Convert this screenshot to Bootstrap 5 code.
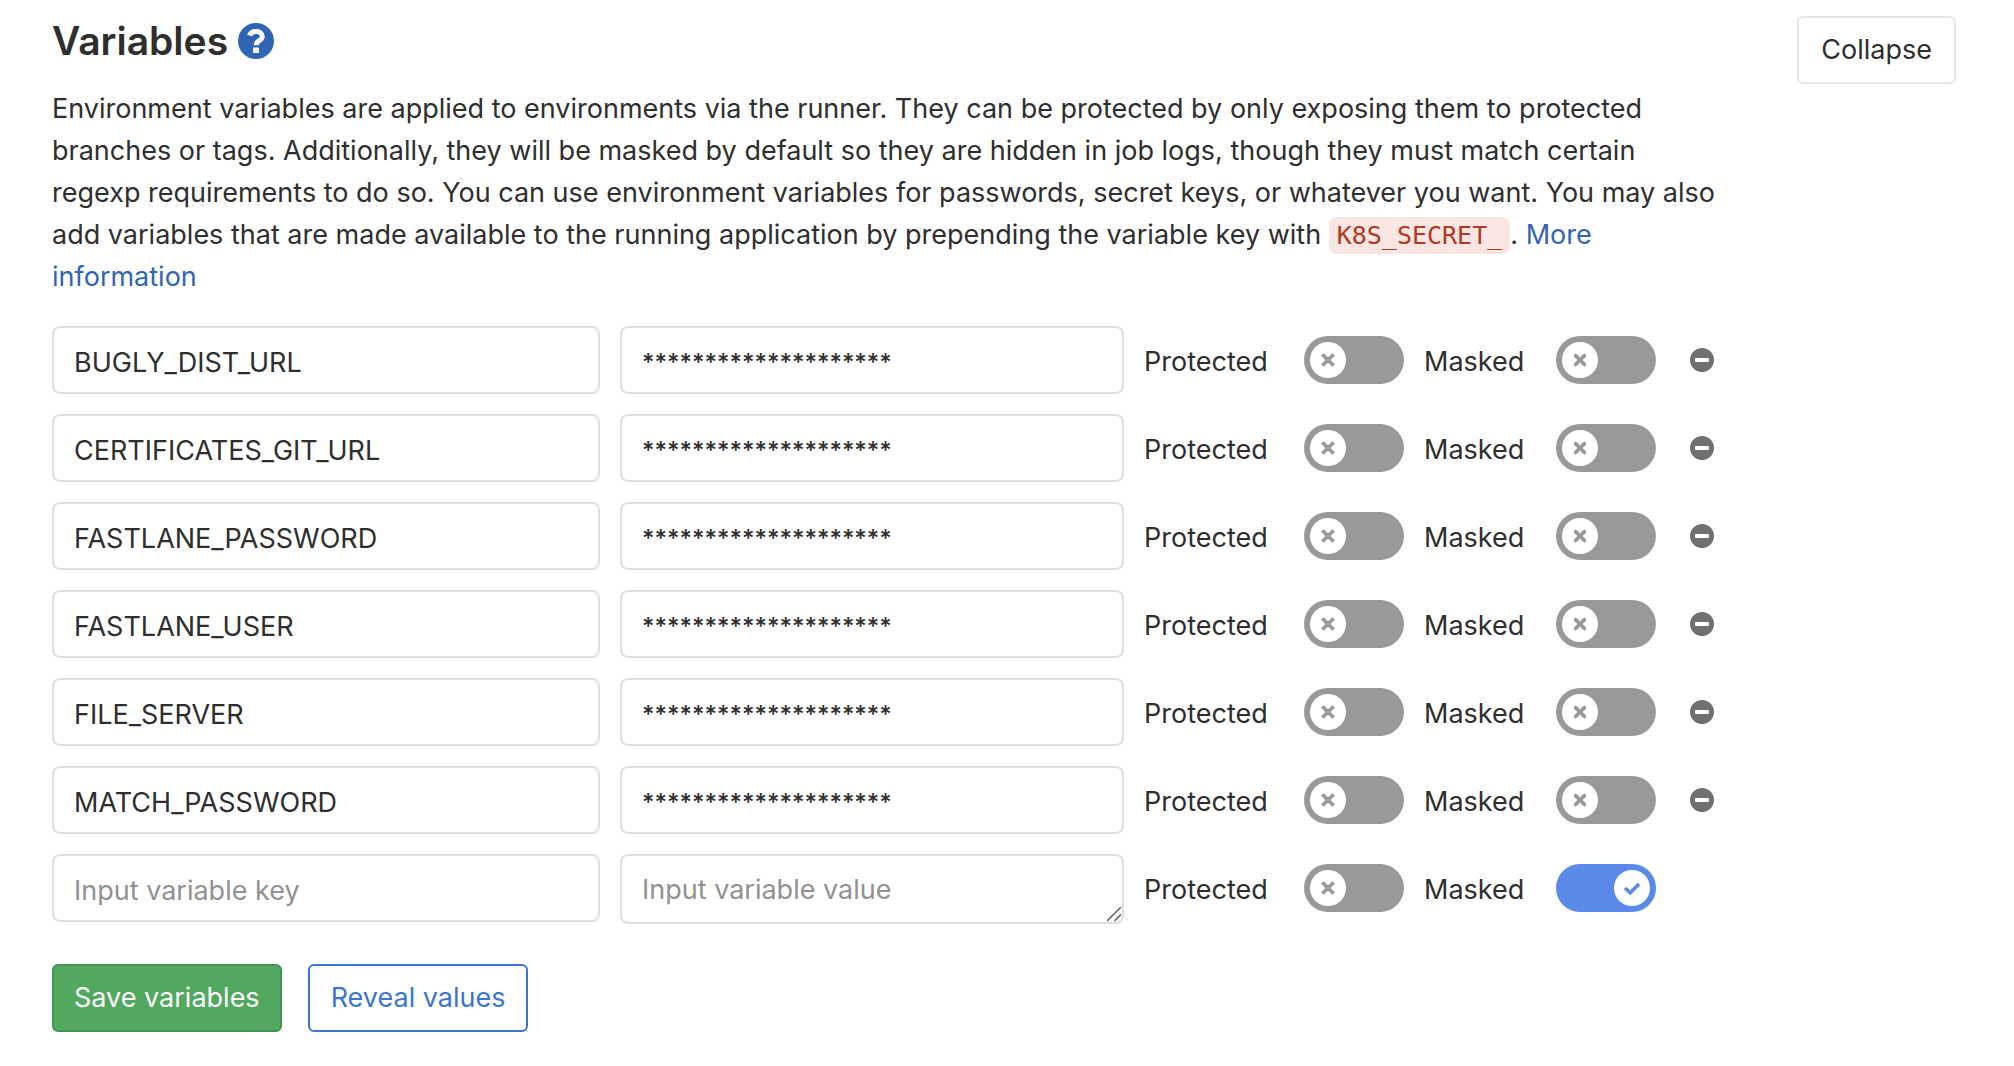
<!DOCTYPE html>
<html lang="en">
<head>
<meta charset="utf-8">
<meta name="viewport" content="width=device-width, initial-scale=1">
<title>Variables</title>
<link href="https://cdn.jsdelivr.net/npm/bootstrap@5.3.0/dist/css/bootstrap.min.css" rel="stylesheet">
<style>
  body { font-family: Inter, "Liberation Sans", sans-serif; font-size: 27px; line-height: 42px; color: #2e2e2e; background: #fff; }
  .settings { padding: 16px 58px 34px 52px; }
  .settings-title { gap: 10px; font-size: 39px; line-height: 50px; font-weight: 600; }
  .settings-intro { padding-right: 226px; margin: 4px 0 28px; }
  .settings a { color: #3065b5; text-decoration: none; }
  .settings code { font-family: "DejaVu Sans Mono", monospace; font-size: 25px; line-height: 30px; color: #b13a24; background: #f9e5e1; border-radius: 8px; padding: 4px 8px; }
  .help-icon, .remove-icon { display: block; }
  .btn { font-size: 27px; line-height: 40px; padding: 12px 20px; border-width: 2px; border-radius: 6px; }
  .btn-collapse { --bs-btn-color: #2e2e2e; --bs-btn-border-color: #e5e5e5; padding: 12px 22px; }
  .btn-save { --bs-btn-color: #fff; --bs-btn-bg: #51a85e; --bs-btn-border-color: #44924f; }
  .btn-reveal { --bs-btn-color: #3a75cf; --bs-btn-border-color: #3a75cf; padding: 12px 21px; }
  .variable-list { gap: 20px; padding-right: 242px; }
  .variable-row { gap: 20px; }
  .form-control { font-size: 27px; line-height: 40px; height: 68px; padding: 14px 20px 10px; border: 2px solid #dfdfdf; border-radius: 8px; color: #2e2e2e; width: auto; min-width: 0; }
  .form-control::placeholder { color: #919191; }
  .field-key { flex: 126 1 0; }
  .field-value { flex: 115 1 0; }
  .field-value[readonly] { font-size: 24px; font-weight: 500; }
  textarea.form-control { height: 70px; min-height: 70px; overflow: hidden; }
  textarea.form-control::-webkit-resizer { background: url("data:image/svg+xml,%3Csvg xmlns='http://www.w3.org/2000/svg' viewBox='0 0 15 15'%3E%3Cpath d='M0 14L14 0M7.500 14L14 7.500' stroke='%23555' stroke-width='1.4' fill='none'/%3E%3C/svg%3E") center / 15px 15px no-repeat; }
  .toggle-label { padding-top: 4px; line-height: 64px; }
  .toggle-protected { width: 260px; }
  .toggle-masked { width: 232px; }
  .form-check-input.toggle-input { width: 100px; height: 48px; margin: 10px 0; border: 0; border-radius: 24px; background-color: #999; background-size: 36px 36px; background-position: 6px center; background-repeat: no-repeat;
    background-image: url("data:image/svg+xml,%3Csvg xmlns='http://www.w3.org/2000/svg' viewBox='0 0 36 36'%3E%3Ccircle cx='18' cy='18' r='18' fill='white'/%3E%3Cpath d='M13.5 13.5l9 9m0-9l-9 9' stroke='%23999' stroke-width='3.8' stroke-linecap='round' fill='none'/%3E%3C/svg%3E"); }
  .form-check-input.toggle-input:checked { background-color: #5a89e8; background-position: 58px center;
    background-image: url("data:image/svg+xml,%3Csvg xmlns='http://www.w3.org/2000/svg' viewBox='0 0 36 36'%3E%3Ccircle cx='18' cy='18' r='18' fill='white'/%3E%3Cpath d='M11 18l5.2 4.800L25 14' stroke='%235a89e8' stroke-width='3.6' fill='none'/%3E%3C/svg%3E"); }
  .remove-slot { width: 38px; height: 68px; padding: 0 0 0 14px; }
  .settings-actions { gap: 26px; margin-top: 40px; }
</style>
</head>
<body>
<main class="settings">
  <header>
    <div class="d-flex justify-content-between align-items-start">
      <h1 class="settings-title d-flex align-items-center mb-0">Variables
        <a href="#" aria-label="Help"><svg class="help-icon" width="36" height="36" viewBox="0 0 36 36" aria-hidden="true"><circle cx="18" cy="18" r="18" fill="#3065b5"/><path d="M11.500 12.500C13.500 6.800 24.300 7.200 24.300 13.500C24.300 17.800 18 17.600 18 22.300" fill="none" stroke="#fff" stroke-width="5"/><rect x="15" y="24.500" width="6" height="5.500" rx=".8" fill="#fff"/></svg></a>
      </h1>
      <button type="button" class="btn btn-collapse">Collapse</button>
    </div>
    <p class="settings-intro">Environment variables are applied to environments via the runner. They can be protected by only exposing them to protected branches or tags. Additionally, they will be masked by default so they are hidden in job logs, though they must match certain regexp requirements to do so. You can use environment variables for passwords, secret keys, or whatever you want. You may also add variables that are made available to the running application by prepending the variable key with <code>K8S_SECRET_</code>. <a href="#">More information</a></p>
  </header>
  <form>
    <div class="variable-list d-flex flex-column" id="variables"></div>
    <div class="settings-actions d-flex">
      <button type="submit" class="btn btn-save">Save variables</button>
      <button type="button" class="btn btn-reveal">Reveal values</button>
    </div>
  </form>
</main>
<script>
  const keys = ["BUGLY_DIST_URL", "CERTIFICATES_GIT_URL", "FASTLANE_PASSWORD", "FASTLANE_USER", "FILE_SERVER", "MATCH_PASSWORD", ""];
  const toggle = (name, text, i, on) => `
    <div class="toggle-${name} d-flex justify-content-between flex-shrink-0">
      <label class="toggle-label" for="${name}-${i}">${text}</label>
      <input class="form-check-input toggle-input" type="checkbox" role="switch" id="${name}-${i}"${on ? " checked" : ""}>
    </div>`;
  document.getElementById("variables").innerHTML = keys.map((key, i) => `
    <div class="variable-row d-flex align-items-start">
      <input type="text" class="form-control field-key" aria-label="Variable key" placeholder="Input variable key" value="${key}">
      ${key
        ? `<input type="text" class="form-control field-value" aria-label="Variable value" value="${"*".repeat(20)}" readonly>`
        : `<textarea class="form-control field-value" aria-label="Variable value" placeholder="Input variable value" rows="1"></textarea>`}
      ${toggle("protected", "Protected", i, false)}
      ${toggle("masked", "Masked", i, !key)}
      ${key
        ? `<button type="button" class="remove-slot border-0 bg-transparent d-flex align-items-center flex-shrink-0" aria-label="Remove variable"><svg class="remove-icon" width="24" height="24" viewBox="0 0 24 24" aria-hidden="true"><circle cx="12" cy="12" r="12" fill="#707070"/><rect x="5" y="10" width="14" height="4" rx="1" fill="#fff"/></svg></button>`
        : `<div class="remove-slot flex-shrink-0"></div>`}
    </div>`).join("");
</script>
<script src="https://cdn.jsdelivr.net/npm/bootstrap@5.3.0/dist/js/bootstrap.bundle.min.js"></script>
</body>
</html>
